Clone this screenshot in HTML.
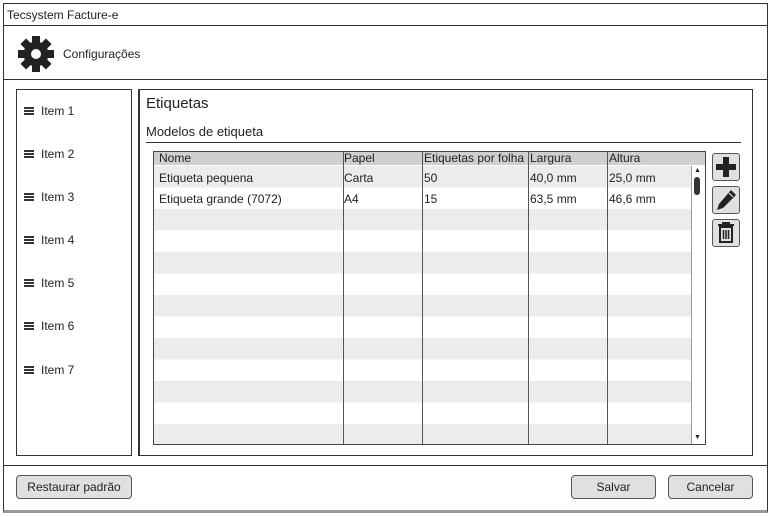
<!DOCTYPE html>
<html><head><style>
body{margin:0;width:771px;height:517px;background:#fff;font-family:"Liberation Sans",sans-serif;font-size:12px;color:#222;position:relative;overflow:hidden}
.a{position:absolute;box-sizing:border-box}
.btn{position:absolute;box-sizing:border-box;border:1px solid #555;border-radius:4px;background:#e0e0e0;text-align:center;line-height:22px;font-size:12px}
.it{position:absolute;left:24px;font-size:12px}
.it:before{content:"";display:inline-block;width:10px;height:8px;border-top:2px solid #333;border-bottom:2px solid #333;box-sizing:border-box;margin-right:7px;vertical-align:0px;background:linear-gradient(#333,#333) 0 1px/10px 2px no-repeat}
.ib{position:absolute;left:712px;width:28px;height:28px;border:1px solid #555;border-radius:3px;background:#e0e0e0;box-sizing:border-box}
</style></head><body>
<div class="a" style="left:3px;top:3px;width:765px;height:510px;border:1px solid #333;border-bottom:3px solid #999"></div>
<div class="a" style="left:7px;top:8px;font-size:12px">Tecsystem Facture-e</div>
<div class="a" style="left:3px;top:25px;width:765px;height:1px;background:#333"></div>
<svg class="a" style="left:17px;top:35px" width="38" height="38" viewBox="0 0 38 38"><g fill="#222" transform="translate(19 19)"><circle r="12.5"/><g id="t"><rect x="-4" y="-18" width="8" height="8"/></g><use href="#t" transform="rotate(45)"/><use href="#t" transform="rotate(90)"/><use href="#t" transform="rotate(135)"/><use href="#t" transform="rotate(180)"/><use href="#t" transform="rotate(225)"/><use href="#t" transform="rotate(270)"/><use href="#t" transform="rotate(315)"/></g><circle cx="19" cy="19" r="5" fill="#fff"/></svg>
<div class="a" style="left:63px;top:47px">Configurações</div>
<div class="a" style="left:3px;top:79px;width:765px;height:1px;background:#333"></div>
<div class="a" style="left:16px;top:89px;width:116px;height:367px;border:1px solid #333"></div>
<div class="it" style="top:104px">Item 1</div>
<div class="it" style="top:147px">Item 2</div>
<div class="it" style="top:190px">Item 3</div>
<div class="it" style="top:233px">Item 4</div>
<div class="it" style="top:276px">Item 5</div>
<div class="it" style="top:319px">Item 6</div>
<div class="it" style="top:363px">Item 7</div>
<div class="a" style="left:138px;top:89px;width:615px;height:367px;border:1px solid #333;border-left-width:2px"></div>
<div class="a" style="left:146px;top:95px;font-size:15px">Etiquetas</div>
<div class="a" style="left:146px;top:124px;font-size:13px">Modelos de etiqueta</div>
<div class="a" style="left:146px;top:142px;width:595px;height:1px;background:#333"></div>
<div class="a" style="left:153px;top:151px;width:553px;height:294px;border:1px solid #444;background:repeating-linear-gradient(#ececec 0 21.5px,#fff 21.5px 43px) 0 14px/100% 100% no-repeat"></div>
<div class="a" style="left:154px;top:152px;width:551px;height:13px;background:#cfcfcf"></div>
<div class="a" style="left:343px;top:152px;width:1px;height:292px;background:#555"></div>
<div class="a" style="left:422px;top:152px;width:1px;height:292px;background:#555"></div>
<div class="a" style="left:528px;top:152px;width:1px;height:292px;background:#555"></div>
<div class="a" style="left:607px;top:152px;width:1px;height:292px;background:#555"></div>
<div class="a" style="left:691px;top:166px;width:14px;height:278px;background:#fff;border-left:1px solid #999"></div>
<div class="a" style="left:694px;top:177px;width:6px;height:18px;background:#333;border-radius:3px"></div>
<div class="a" style="left:694px;top:167px;font-size:7px">▲</div>
<div class="a" style="left:694px;top:434px;font-size:7px">▼</div>
<div class="a" style="left:159px;top:152px;line-height:13px">Nome</div>
<div class="a" style="left:344px;top:152px;line-height:13px">Papel</div>
<div class="a" style="left:424px;top:152px;line-height:13px">Etiquetas por folha</div>
<div class="a" style="left:530px;top:152px;line-height:13px">Largura</div>
<div class="a" style="left:609px;top:152px;line-height:13px">Altura</div>
<div class="a" style="left:159px;top:171px">Etiqueta pequena</div>
<div class="a" style="left:344px;top:171px">Carta</div>
<div class="a" style="left:424px;top:171px">50</div>
<div class="a" style="left:530px;top:171px">40,0 mm</div>
<div class="a" style="left:609px;top:171px">25,0 mm</div>
<div class="a" style="left:159px;top:192px">Etiqueta grande (7072)</div>
<div class="a" style="left:344px;top:192px">A4</div>
<div class="a" style="left:424px;top:192px">15</div>
<div class="a" style="left:530px;top:192px">63,5 mm</div>
<div class="a" style="left:609px;top:192px">46,6 mm</div>
<div class="ib" style="top:153px"><svg width="26" height="26" viewBox="0 0 26 26"><path d="M10 3h6v7h7v6h-7v7h-6v-7H3v-6h7z" fill="#222"/></svg></div>
<div class="ib" style="top:186px"><svg width="26" height="26" viewBox="0 0 26 26"><path d="M18 3l5 5L10 21l-6 2 2-6z" fill="#222"/><path d="M16 6l4 4" stroke="#e0e0e0" stroke-width="1.2"/></svg></div>
<div class="ib" style="top:219px"><svg width="26" height="26" viewBox="0 0 26 26"><path d="M5 5h16M10 5V3h6v2M7 7h12v15H7z" fill="none" stroke="#222" stroke-width="2"/><path d="M10.5 10v9M13 10v9M15.5 10v9" stroke="#222" stroke-width="1.5"/></svg></div>
<div class="a" style="left:3px;top:465px;width:765px;height:1px;background:#333"></div>
<div class="btn" style="left:16px;top:475px;width:116px;height:24px">Restaurar padrão</div>
<div class="btn" style="left:571px;top:475px;width:85px;height:24px">Salvar</div>
<div class="btn" style="left:668px;top:475px;width:85px;height:24px">Cancelar</div>
</body></html>
